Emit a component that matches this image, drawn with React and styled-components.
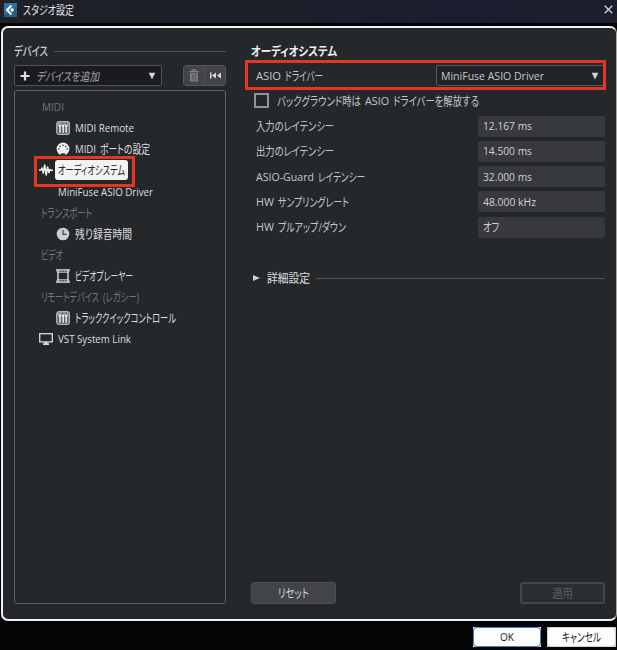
import React, { useLayoutEffect, useRef, useState } from 'react';
import styled, { createGlobalStyle } from 'styled-components';

const GlobalStyle = createGlobalStyle`
  * {
    box-sizing: border-box;
  }

  body {
    margin: 0;
    background: #050508;
    font-family: 'Open Sans', 'Noto Sans CJK JP', sans-serif;
    font-size: 12px;
    color: #c6c7c9;
  }
`;

const Window = styled.div`
  width: 617px;
  height: 650px;
  display: flex;
  flex-direction: column;
  background: #050508;
  overflow: hidden;
`;

const TitleBar = styled.header`
  height: 23px;
  padding: 0 4px;
  display: flex;
  align-items: center;
  gap: 6px;
  flex-shrink: 0;
  color: #e2e3e5;
  background: linear-gradient(90deg, #1f2127 0%, #1c1f28 40%, #191d2e 75%, #1d1e2b 100%);
`;

const CloseButton = styled.div`
  display: flex;
  margin: -4px 0 0 auto;
`;

const LogoSlot = styled.div`
  display: flex;
  margin-top: -4px;
`;

const TitleText = styled.div`
  margin-top: -4px;
`;

const Panel = styled.main`
  height: 595px;
  margin: 3px 0 0 1px;
  padding: 14px 10px 0 11px;
  display: flex;
  gap: 25px;
  flex-shrink: 0;
  background: #24282b;
  border: 2px solid #f1f1f1;
  border-right: 1px solid #a8a8a8;
  border-radius: 7px;
`;

const Sidebar = styled.section`
  width: 212px;
  display: flex;
  flex-direction: column;
`;

const Heading = styled.h2`
  height: 18px;
  margin: 0;
  display: flex;
  align-items: center;
  gap: 6px;
  font-size: 12.5px;
  font-weight: ${props => props.$bold ? 700 : 500};
  color: ${props => props.$bold ? '#f2f2f2' : '#d0d1d2'};
`;

const Rule = styled.div`
  flex: 1;
  height: 1px;
  background: #505356;
`;

const Toolbar = styled.div`
  margin-top: 5px;
  display: flex;
  justify-content: space-between;
`;

const AddDevice = styled.div`
  width: 148px;
  height: 21px;
  padding: 0 5px;
  display: flex;
  align-items: center;
  gap: 6px;
  background: #1b1b1f;
  border: 1px solid #505255;
  border-radius: 2px;
  color: #a3a4a6;
  font-style: italic;

  svg:last-child {
    margin-left: auto;
  }
`;

const ButtonGroup = styled.div`
  display: flex;
  width: 43px;
  height: 21px;
  border: 1px solid #55575a;
  border-radius: 3px;
  overflow: hidden;
`;

const ToolButton = styled.div`
  flex: 1;
  display: flex;
  align-items: center;
  justify-content: center;
  background: #434447;

  & + & {
    border-left: 1px solid #4f5154;
  }
`;

const DeviceList = styled.div`
  height: 514px;
  margin-top: 4px;
  padding: 5.5px 0 0 26px;
  border: 1px solid #5e6164;
  border-radius: 3px;
`;

const DeviceRow = styled.div`
  height: 21.13px;
  padding-left: ${props => props.$indent}px;
  display: flex;
  align-items: center;
  gap: 5px;
  position: relative;
  color: ${props => props.$group ? '#74777a' : '#dedfe0'};
`;

const OutdentedIcon = styled.span`
  display: flex;
  margin-left: -2px;
`;

const SelectedName = styled.div`
  width: 73px;
  height: 20px;
  margin-left: -3px;
  padding-left: 3px;
  display: flex;
  align-items: center;
  background: #f3f3f3;
  border-radius: 3px;
  color: #222427;
`;

const DeviceHighlight = styled.div`
  position: absolute;
  left: -7px;
  top: -4px;
  width: 101px;
  height: 31px;
  border: 3px solid #e83520;
`;

const Settings = styled.section`
  width: 354px;
  display: flex;
  flex-direction: column;
`;

const DriverRow = styled.div`
  height: 21px;
  margin-top: 5px;
  padding-left: 5px;
  display: flex;
  align-items: center;
  justify-content: space-between;
  position: relative;
`;

const DriverHighlight = styled.div`
  position: absolute;
  inset: -5px -1px -4px -6px;
  border: 3px solid #e83520;
`;

const DriverSelect = styled.div`
  width: 169px;
  height: 21px;
  padding: 0 5px 0 4px;
  display: flex;
  align-items: center;
  justify-content: space-between;
  border: 1px solid #55585b;
  border-radius: 2px;
  background: #212427;
`;

const CheckRow = styled.div`
  height: 15px;
  margin-top: 7px;
  padding-left: 3px;
  display: flex;
  align-items: center;
  gap: 8px;
`;

const CheckBox = styled.div`
  width: 15px;
  height: 15px;
  border: 2px solid #929395;
`;

const Fields = styled.div`
  margin-top: 7.5px;
  display: flex;
  flex-direction: column;
  gap: 4.3px;
`;

const FieldRow = styled.div`
  height: 21px;
  padding-left: 5px;
  display: flex;
  align-items: center;
  justify-content: space-between;
`;

const FieldValue = styled.div`
  width: 127px;
  height: 21px;
  padding-left: 5px;
  display: flex;
  align-items: center;
  background: #38393c;
  border-radius: 2px;
  color: #cfd0d1;
`;

const Advanced = styled.div`
  height: 20px;
  margin-top: 30.5px;
  padding-left: 2px;
  display: flex;
  align-items: center;
  gap: 6px;
  font-weight: 500;

  svg {
    margin-right: 1px;
  }
`;

const Actions = styled.div`
  margin-top: auto;
  margin-bottom: 15px;
  display: flex;
  justify-content: space-between;
`;

const ActionButton = styled.div`
  width: 85px;
  height: 22px;
  display: flex;
  align-items: center;
  justify-content: center;
  border-radius: 3px;
  background: ${props => props.$disabled ? '#2b2d30' : '#434447'};
  border: ${props => props.$disabled ? '2px solid #44474a' : '1px solid #4e5053'};
  color: ${props => props.$disabled ? '#5c5f62' : '#d5d6d7'};
`;

const Footer = styled.footer`
  padding: 6px 1px 0 0;
  display: flex;
  justify-content: flex-end;
  gap: 6px;
`;

const DialogButton = styled.div`
  width: ${props => props.$primary ? 68 : 69}px;
  height: 20px;
  display: flex;
  align-items: center;
  justify-content: center;
  background: ${props => props.$primary ? '#d5dbe2' : '#c4c4c4'};
  color: #1c1c1e;
`;

const DialogFace = styled.div`
  width: 100%;
  height: 100%;
  display: flex;
  align-items: center;
  justify-content: center;
  background: #fdfdfd;
  border: ${props => props.$primary ? '1px solid #4380c4' : '1px solid #d2d2d2'};
  border-radius: 4px;
`;

const LabelLine = styled.span`
  display: flex;
  align-items: center;
  gap: 4px;
`;

const TextSlot = styled.span`
  display: block;
  flex-shrink: 0;
  line-height: 18px;
  height: 18px;
`;

const TextInk = styled.span`
  display: block;
  width: max-content;
  white-space: nowrap;
  line-height: ${props => props.$latin ? 18 : 19}px;
  transform-origin: 0 50%;
  font-size: ${props => props.$latin ? '11.5px' : 'inherit'};
  font-feature-settings: 'palt';
`;

// Condenses a run of text so it fills exactly the given width
const Fit = ({ width, children }) => {
  const ref = useRef(null);
  const [scale, setScale] = useState(1);

  useLayoutEffect(() => {
    setScale(width / ref.current.getBoundingClientRect().width);
  }, []);

  return (
    <TextSlot style={{ width }}>
      <TextInk ref={ref} $latin={/^[\w .-]+$/.test(children)} style={{ transform: `scaleX(${scale})` }}>
        {children}
      </TextInk>
    </TextSlot>
  );
};

const Label = ({ parts }) => (
  <LabelLine>
    {parts.map(([text, width]) => <Fit key={text} width={width}>{text}</Fit>)}
  </LabelLine>
);

const LogoIcon = () => (
  <svg width="13" height="14" viewBox="0 0 13 14">
    <rect width="13" height="14" fill="#1f5f90" />
    <path d="M0 0h13v3L0 12z" fill="#3a86b6" opacity=".5" />
    <path d="M7.4 2.4 3 7l4.4 4.6" fill="none" stroke="#fff" strokeWidth="2.1" />
    <circle cx="8.2" cy="7" r="1.7" fill="#fff" />
  </svg>
);

const CloseIcon = () => (
  <svg width="9" height="9" viewBox="0 0 9 9">
    <path d="M.7.7l7.6 7.6M8.3.7.7 8.3" stroke="#d3d4d8" strokeWidth="1.3" />
  </svg>
);

const DownIcon = () => (
  <svg width="8" height="8" viewBox="0 0 8 8">
    <path d="M.7.8h6.6L4 7.6z" fill="#d2d3d4" />
  </svg>
);

const RightIcon = () => (
  <svg width="7" height="6" viewBox="0 0 7 6">
    <path d="M0 0v6l7-3z" fill="#cfd0d1" />
  </svg>
);

const PlusIcon = () => (
  <svg width="10" height="10" viewBox="0 0 10 10">
    <path d="M5 .5v9M.5 5h9" stroke="#dcdddd" strokeWidth="2.2" />
  </svg>
);

const TrashIcon = () => (
  <svg width="12" height="13" viewBox="0 0 12 13">
    <path d="M1 2.6h10M4.2 2V.8h3.6V2" fill="none" stroke="#7f8082" strokeWidth="1.2" />
    <path d="M2 4h8v8.5H2z" fill="#7b7c7e" />
    <path d="M4.3 5v6.5M6 5v6.5M7.7 5v6.5" stroke="#505154" strokeWidth=".7" />
  </svg>
);

const RewindIcon = () => (
  <svg width="11" height="7" viewBox="0 0 11 7">
    <path d="M0 .5h1.5v6H0zM6 .5v6L2 3.5zM11 .5v6L7 3.5z" fill="#d8d9da" />
  </svg>
);

const FadersIcon = () => (
  <svg width="14" height="14" viewBox="0 0 14 14">
    <rect x=".7" y=".7" width="12.6" height="12.6" rx="2.2" fill="#5b5e61" stroke="#b4b6b8" strokeWidth="1.3" />
    <path d="M1.5 1.5h11v3h-11z" fill="#a3a5a7" />
    <path d="M2.6 4.9h2.3M5.9 4.9h2.3M9.2 4.9h2.3" stroke="#f0f0f0" strokeWidth="1.7" />
    <path d="M4 5v6.8M7.2 5v6.8M10.2 5v6.8" stroke="#e2e3e4" strokeWidth="1.6" />
    <path d="M6.2 2.6h1M9.6 2.6h1" stroke="#34373a" strokeWidth="1.1" />
  </svg>
);

const MidiPortIcon = () => (
  <svg width="14" height="14" viewBox="0 0 14 14">
    <circle cx="7" cy="7" r="6.4" fill="#f0f0f0" />
    <g fill="#24282b">
      <circle cx="2.9" cy="7" r=".75" />
      <circle cx="4.2" cy="4.4" r=".75" />
      <circle cx="7" cy="3.2" r=".75" />
      <circle cx="9.8" cy="4.4" r=".75" />
      <circle cx="11.1" cy="7" r=".75" />
      <path d="M4.8 11.4h4.4v2.4H4.8z" />
    </g>
  </svg>
);

const WaveIcon = () => (
  <svg width="14" height="12" viewBox="0 0 14 12">
    <path
      d="M0 6h2l1-2L4.3 9l1.4-8 1.5 10 1.4-8L10 8.5l1-3 .9.8H14"
      fill="none"
      stroke="#f2f2f2"
      strokeWidth="1.5"
      strokeLinejoin="round"
    />
  </svg>
);

const ClockIcon = () => (
  <svg width="14" height="14" viewBox="0 0 14 14">
    <circle cx="7" cy="7" r="6.3" fill="#cfd0d1" />
    <path d="M7 2.8v4.5h3.6" fill="none" stroke="#44474a" strokeWidth="1.2" />
  </svg>
);

const FilmIcon = () => (
  <svg width="14" height="14" viewBox="0 0 14 14">
    <path d="M2 1v12M12 1v12" stroke="#e6e6e6" strokeWidth="1.3" />
    <path d="M0 .9h14M0 13.1h14" stroke="#e6e6e6" strokeWidth="1.1" />
    <path d="M1 3.2h12M1 10.8h12" stroke="#e6e6e6" strokeWidth=".9" />
    <path d="M.5 2h13M.5 12h13" stroke="#c9cacb" strokeWidth="1.4" strokeDasharray=".7 1.8" />
  </svg>
);

const MonitorIcon = () => (
  <svg width="14" height="12" viewBox="0 0 14 12">
    <rect x=".7" y=".7" width="12.6" height="8.2" fill="none" stroke="#d9dadb" strokeWidth="1.3" />
    <path d="M5.5 9h3v1.3H10V12H4v-1.7h1.5z" fill="#d9dadb" />
  </svg>
);

const devices = [
  { group: true, indent: 1, parts: [['MIDI', 22]] },
  { icon: FadersIcon, indent: 15, parts: [['MIDI Remote', 59]] },
  { icon: MidiPortIcon, indent: 15, parts: [['MIDI', 21], ['ポートの設定', 50]] },
  { icon: WaveIcon, outdent: true, selected: true, parts: [['オーディオシステム', 67]] },
  { indent: 17, parts: [['MiniFuse ASIO Driver', 95]] },
  { group: true, indent: 0, parts: [['トランスポート', 51]] },
  { icon: ClockIcon, indent: 15, parts: [['残り録音時間', 57]] },
  { group: true, indent: 0, parts: [['ビデオ', 22]] },
  { icon: FilmIcon, indent: 15, parts: [['ビデオプレーヤー', 58]] },
  { group: true, indent: 0, parts: [['リモートデバイス', 58], ['(レガシー)', 36]] },
  { icon: FadersIcon, indent: 15, parts: [['トラッククイックコントロール', 101]] },
  { icon: MonitorIcon, outdent: true, parts: [['VST System Link', 73]] },
];

const fields = [
  { parts: [['入力のレイテンシー', 78]], value: '12.167 ms', width: 49 },
  { parts: [['出力のレイテンシー', 78]], value: '14.500 ms', width: 49 },
  { parts: [['ASIO-Guard', 58], ['レイテンシー', 47]], value: '32.000 ms', width: 49 },
  { parts: [['HW', 18], ['サンプリングレート', 71]], value: '48.000 kHz', width: 53 },
  { parts: [['HW', 18], ['プルアップ/ダウン', 68]], value: 'オフ', width: 16 },
];

const App = () => {
  return (
    <>
      <GlobalStyle />
      <Window>
        <TitleBar>
          <LogoSlot><LogoIcon /></LogoSlot>
          <TitleText><Fit width={51}>スタジオ設定</Fit></TitleText>
          <CloseButton><CloseIcon /></CloseButton>
        </TitleBar>

        <Panel>
          <Sidebar>
            <Heading>
              <Fit width={34}>デバイス</Fit>
              <Rule />
            </Heading>
            <Toolbar>
              <AddDevice>
                <PlusIcon />
                <Fit width={63}>デバイスを追加</Fit>
                <DownIcon />
              </AddDevice>
              <ButtonGroup>
                <ToolButton><TrashIcon /></ToolButton>
                <ToolButton><RewindIcon /></ToolButton>
              </ButtonGroup>
            </Toolbar>
            <DeviceList>
              {devices.map(({ icon: Icon, group, indent = 0, outdent, selected, parts }) => (
                <DeviceRow key={parts[0][0] + parts.length} $group={group} $indent={indent}>
                  {Icon && (outdent ? <OutdentedIcon><Icon /></OutdentedIcon> : <Icon />)}
                  {selected ? <SelectedName><Label parts={parts} /></SelectedName> : <Label parts={parts} />}
                  {selected && <DeviceHighlight />}
                </DeviceRow>
              ))}
            </DeviceList>
          </Sidebar>

          <Settings>
            <Heading $bold>
              <Fit width={86}>オーディオシステム</Fit>
            </Heading>
            <DriverRow>
              <Label parts={[['ASIO', 25], ['ドライバー', 38]]} />
              <DriverSelect>
                <Fit width={103}>MiniFuse ASIO Driver</Fit>
                <DownIcon />
              </DriverSelect>
              <DriverHighlight />
            </DriverRow>
            <CheckRow>
              <CheckBox />
              <Label parts={[['バックグラウンド時は', 84], ['ASIO', 24], ['ドライバーを解放する', 86]]} />
            </CheckRow>
            <Fields>
              {fields.map(({ parts, value, width }) => (
                <FieldRow key={parts.map(([text]) => text).join(' ')}>
                  <Label parts={parts} />
                  <FieldValue><Fit width={width}>{value}</Fit></FieldValue>
                </FieldRow>
              ))}
            </Fields>
            <Advanced>
              <RightIcon />
              <Fit width={43}>詳細設定</Fit>
              <Rule />
            </Advanced>
            <Actions>
              <ActionButton><Fit width={31}>リセット</Fit></ActionButton>
              <ActionButton $disabled><Fit width={21}>適用</Fit></ActionButton>
            </Actions>
          </Settings>
        </Panel>

        <Footer>
          <DialogButton $primary>
            <DialogFace $primary><Fit width={14}>OK</Fit></DialogFace>
          </DialogButton>
          <DialogButton>
            <DialogFace><Fit width={39}>キャンセル</Fit></DialogFace>
          </DialogButton>
        </Footer>
      </Window>
    </>
  );
};

export default App;
